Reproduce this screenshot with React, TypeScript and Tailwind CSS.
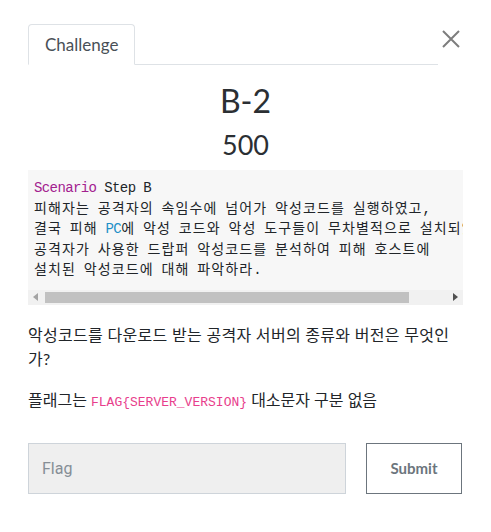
import React from 'react';

const sans = "font-['Lato','Noto_Sans_CJK_KR',sans-serif]";
const mono = "font-['Liberation_Mono','Noto_Sans_CJK_KR',monospace]";

// hangul runs get a bit more room than the latin mono glyphs
function Code({ text }: { text: string }) {
  const parts = text.split(/([가-힣]+)/);
  return (
    <>
      {parts.map((p, i) =>
        /[가-힣]/.test(p) ? (
          <span key={i} className="tracking-[1.1px]">{p}</span>
        ) : (
          <span key={i}>{p}</span>
        )
      )}
    </>
  );
}

function CloseIcon() {
  return (
    <svg width="18" height="18" viewBox="0 0 18 18" fill="none" stroke="#7d7d7d" strokeWidth="2">
      <path d="M1 1L17 17M17 1L1 17" />
    </svg>
  );
}

function Arrow({ dir }: { dir: 'left' | 'right' }) {
  return (
    <div className="flex h-[15px] w-[15px] items-center justify-center">
      <svg width="5" height="8" viewBox="0 0 5 8">
        {dir === 'left' ? (
          <path d="M5 0L0 4L5 8Z" fill="#a3a3a3" />
        ) : (
          <path d="M0 0L5 4L0 8Z" fill="#505050" />
        )}
      </svg>
    </div>
  );
}

export default function App() {
  return (
    <div className={`min-h-[532px] w-[491px] bg-white px-[28px] pt-[24px] text-[#212529] ${sans}`}>
      <div className="flex items-start">
        <ul className="flex flex-1 border-b border-[#dee2e6]">
          <li className="-mb-px rounded-t-[4px] border border-b-white border-[#dee2e6] bg-white px-[16px] py-[7px] text-[17px] leading-[25px] text-[#495057]">
            Challenge
          </li>
        </ul>
        <button className="flex h-[26px] w-[25px] items-center justify-center pt-[4px]">
          <CloseIcon />
        </button>
      </div>

      <h2 className="mt-[17px] text-center text-[32px] leading-[38px] font-normal text-[#2b2f33]">B-2</h2>
      <h3 className="mt-[8px] text-center text-[27px] leading-[34px] font-normal text-[#2b2f33]">500</h3>

      <div className="mt-[8px] bg-[#f7f7f7]">
        <pre className={`overflow-hidden pl-[6px] pt-[8px] pb-[9px] text-[14px] leading-[20.5px] tracking-[-0.6px] text-[#212529] ${mono}`}>
          <span className="text-[#a3218f]">Scenario</span> Step B{'\n'}
          <Code text="피해자는 공격자의 속임수에 넘어가 악성코드를 실행하였고," />{'\n'}
          <Code text="결국 피해 " /><span className="text-[#1d8fc7]">PC</span><Code text="에 악성 코드와 악성 도구들이 무차별적으로 설치되었다." />{'\n'}
          <Code text="공격자가 사용한 드랍퍼 악성코드를 분석하여 피해 호스트에" />{'\n'}
          <Code text="설치된 악성코드에 대해 파악하라." />
        </pre>
        <div className="flex h-[15px] items-center bg-[#f1f1f1]">
          <Arrow dir="left" />
          <div className="flex flex-1 items-center px-[2px]">
            <div className="h-[11px] w-[364px] bg-[#c1c1c1]" />
          </div>
          <Arrow dir="right" />
        </div>
      </div>

      <p className="mt-[18px] text-[16px] leading-[24px] tracking-[0.3px]">
        악성코드를 다운로드 받는 공격자 서버의 종류와 버전은 무엇인가?
      </p>
      <p className="mt-[17px] text-[16px] leading-[24px]">
        플래그는 <code className={`text-[13px] text-[#e83e8c] ${mono}`}>FLAG{'{'}SERVER_VERSION{'}'}</code> 대소문자 구분 없음
      </p>

      <div className="mt-[28px] flex gap-[20px]">
        <input
          placeholder="Flag"
          className="h-[51px] w-[318px] border border-[#ced4da] bg-[#efefef] px-[13px] text-[16px] font-['Roboto',sans-serif] placeholder:text-[#868e96] outline-none"
        />
        <button className="h-[51px] w-[96px] border border-[#6c757d] text-[15px] font-bold text-[#6c757d]">
          Submit
        </button>
      </div>
    </div>
  );
}
